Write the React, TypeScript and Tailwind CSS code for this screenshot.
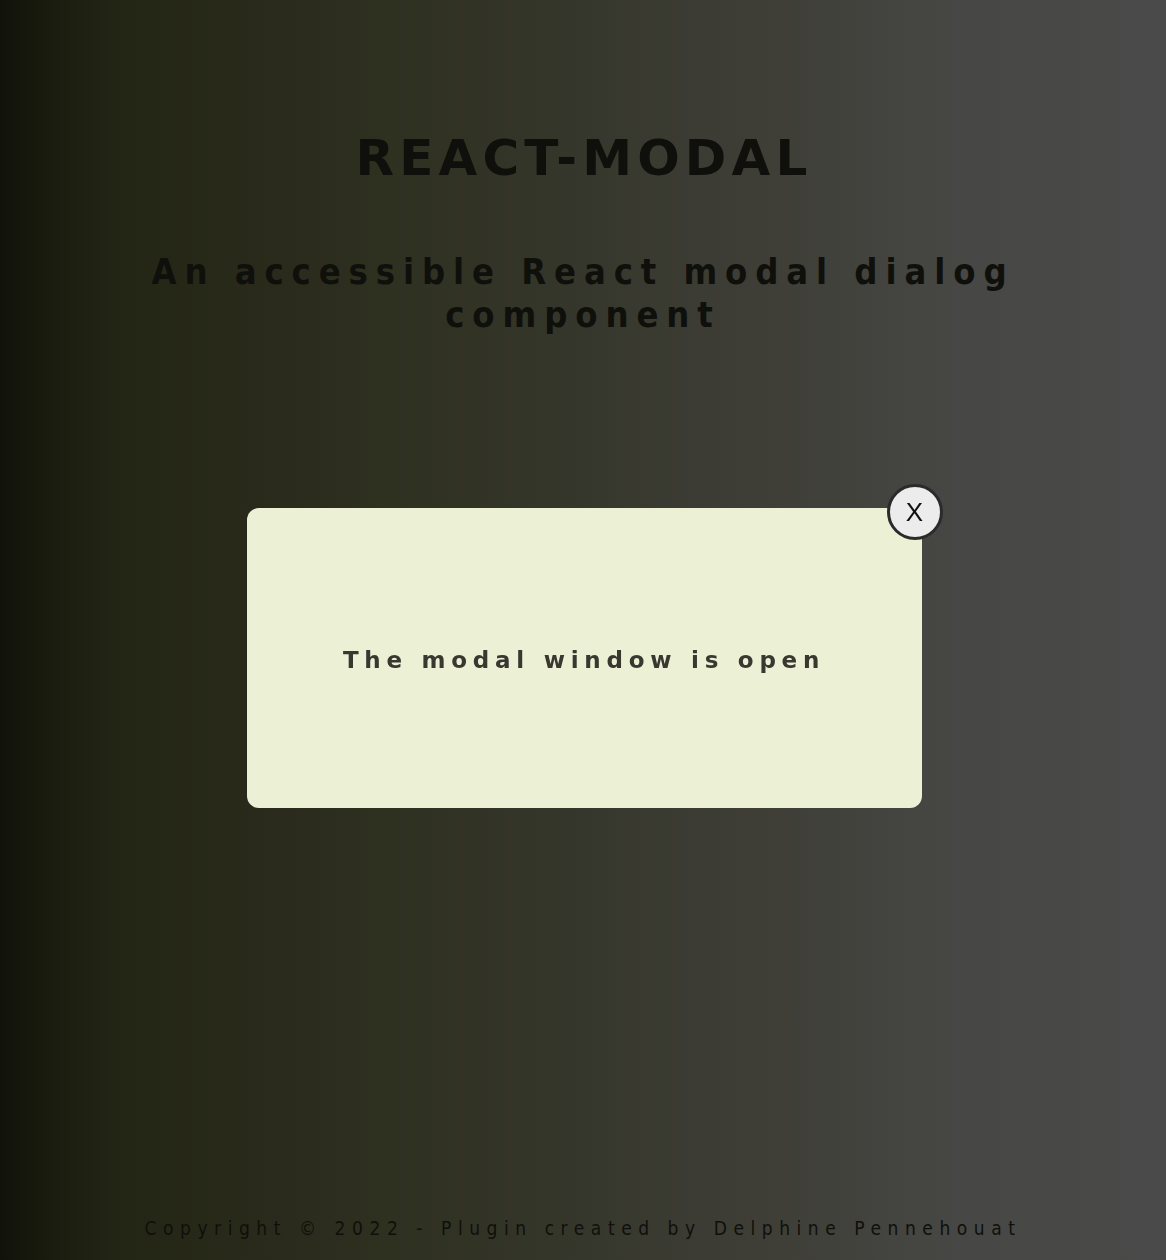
import React from "react";

export default function App() {
  return (
    <div className="relative min-h-screen w-full flex flex-col items-center bg-[linear-gradient(to_right,#11130a_0%,#1b1d10_5%,#242615_11%,#2a2b1c_25%,#2e3020_33%,#36372c_50%,#3f3f38_67%,#474745_83%,#4a4a4a_100%)] font-['DejaVu_Sans',sans-serif]">
      <header className="flex flex-col items-center pt-[128px]">
        <h1 className="text-[50px] leading-[60px] font-bold tracking-[0.104em] pl-[0.04em] text-[#0f100b] font-['DejaVu_Sans',sans-serif]">
          REACT-MODAL
        </h1>
        <h2 className="mt-[62px] w-[940px] text-center text-[36px] leading-[43px] font-bold tracking-[0.22em] text-[#0f100b] font-['DejaVu_Sans_Condensed','DejaVu_Sans',sans-serif]">
          An accessible React modal dialog component
        </h2>
      </header>
      <div className="flex-1" />
      <footer className="pb-[20px] text-[19px] leading-[24px] tracking-[0.345em] text-[#0f100b] font-['DejaVu_Sans_Condensed','DejaVu_Sans',sans-serif]">
        Copyright © 2022 - Plugin created by Delphine Pennehouat
      </footer>

      <div className="fixed inset-0 flex items-center justify-center">
        <div className="relative mt-[56px] ml-[2px] w-[675px] h-[300px] rounded-[12px] bg-[#ecf0d5] flex items-center justify-center">
          <p className="mt-[4px] text-[23px] font-bold tracking-[0.25em] text-[#383831] font-['DejaVu_Sans',sans-serif]">
            The modal window is open
          </p>
          <button className="absolute top-[-24px] right-[-21px] w-[56px] h-[56px] rounded-full bg-[#ececec] border-[3px] border-[#2b2b2b] flex items-center justify-center text-[26px] text-[#111] font-['Liberation_Sans',sans-serif]">
            X
          </button>
        </div>
      </div>
    </div>
  );
}
